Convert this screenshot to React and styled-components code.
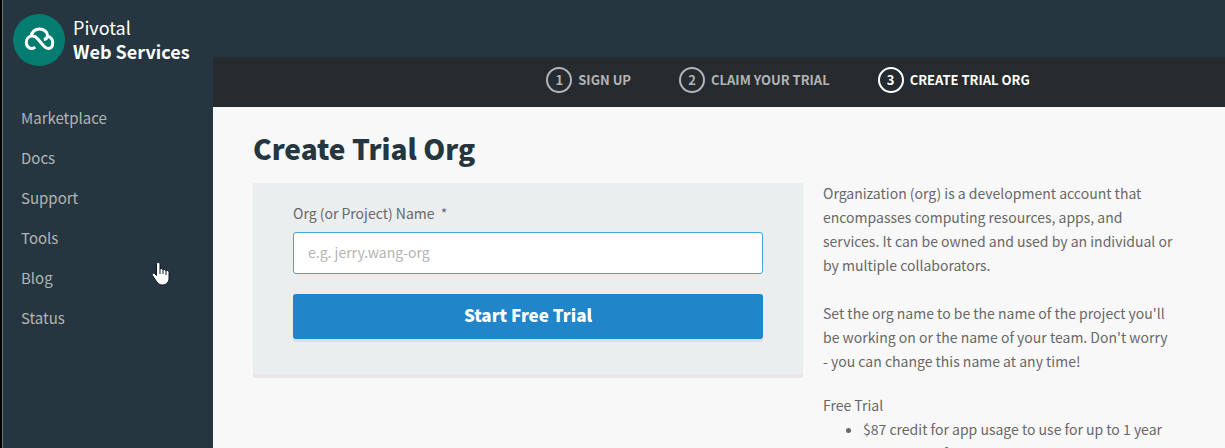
import React from "react";
import styled, { createGlobalStyle } from "styled-components";

const GlobalStyle = createGlobalStyle`
  *, *::before, *::after { box-sizing: border-box; }
  body {
    margin: 0;
    background: #f8f8f8;
    color: #686868;
    font-family: "Noto Sans CJK SC", "Noto Sans", sans-serif;
    font-size: 14px;
    line-height: 24px;
  }
`;

const Page = styled.div`
  display: flex;
  height: 100vh;
  overflow: hidden;
  border-left: 2px solid #000000;
`;

const Sidebar = styled.aside`
  flex: 0 0 211px;
  border-left: 1px solid #6f7678;
  background: #253640;
  color: #ffffff;
`;

const Brand = styled.a`
  display: flex;
  align-items: center;
  gap: 8px;
  padding: 14px 0 0 10px;
  color: inherit;
  font-size: 18px;
  text-decoration: none;
`;

const BrandName = styled.span`
  display: flex;
  flex-direction: column;
  padding-bottom: 2px;
  white-space: nowrap;
`;

const Menu = styled.nav`
  display: flex;
  flex-direction: column;
  gap: 16px;
  padding: 40px 18px;
  font-size: 15px;
`;

const MenuLink = styled.a`
  color: #b4b4b4;
  text-decoration: none;
`;

const Main = styled.main`
  flex: 1;
  min-width: 0;
`;

const TopBar = styled.div`
  height: 57px;
  background: #253640;
`;

const Steps = styled.ol`
  display: flex;
  justify-content: center;
  gap: 48px;
  margin: 0;
  padding: 10px 0 14px 138px;
  background: #252b2e;
  list-style: none;
`;

const Step = styled.li`
  display: flex;
  align-items: center;
  gap: 6px;
  color: ${(p) => (p.$active ? "#ffffff" : "#b4b4b4")};
  font-size: 13px;
  font-weight: 700;
  white-space: nowrap;
`;

const StepNumber = styled.span`
  display: flex;
  align-items: center;
  justify-content: center;
  width: 26px;
  height: 26px;
  border: 2px solid currentColor;
  border-radius: 50%;
`;

const Content = styled.div`
  padding: 21px 40px;
`;

const Title = styled.h1`
  margin: 0 0 13px;
  color: #253640;
  font-size: 28px;
  font-weight: 900;
  line-height: 40px;
`;

const Columns = styled.div`
  display: grid;
  grid-template-columns: minmax(0, 1fr) 362px;
  gap: 20px;
  align-items: start;
`;

const OrgForm = styled.form`
  display: flex;
  flex-direction: column;
  margin-top: 2px;
  padding: 18px 40px 35px;
  border-bottom: 4px solid #e7e7e7;
  background: #eaeeef;
`;

const Label = styled.label`
  margin-bottom: 7px;
`;

const TextInput = styled.input`
  height: 42px;
  margin-bottom: 20px;
  padding: 0 14px 2px;
  border: 1px solid #45a5d8;
  border-radius: 3px;
  background: #ffffff;
  color: #686868;
  font: inherit;
  outline: none;

  &::placeholder {
    color: #b4b4b4;
    opacity: 1;
  }
`;

const SubmitButton = styled.button`
  height: 45px;
  padding: 0 0 4px;
  border: 0;
  border-radius: 3px;
  background: #2185c9;
  box-shadow: 0 3px 0 #dbdfe1;
  color: #ffffff;
  font: inherit;
  font-size: 17px;
  font-weight: 900;
`;

const Info = styled.section`
  min-width: 0;
  padding-right: 12px;
`;

const Paragraph = styled.p`
  margin: 0 0 24px;
`;

const InfoHeading = styled.h2`
  margin: -4px 0 0;
  font-size: 14px;
  font-weight: 400;
  line-height: 24px;
`;

const PlanList = styled.ul`
  margin: 0;
  padding-left: 40px;
`;

const Pointer = styled.svg`
  position: absolute;
  top: 261px;
  left: 151px;
  pointer-events: none;
`;

function Logo() {
  return (
    <svg width="52" height="52" viewBox="0 0 52 52" aria-hidden="true">
      <circle cx="26" cy="26" r="26" fill="#047d70" />
      <path
        d="M22.200 33.200C18.500 36.300 13.300 33.300 13.300 28.500C13.300 24.800 16 22 19.500 22C22.300 22 23.800 23.600 25.500 25.700L30.500 31.800C32 33.500 33.500 34.500 35.300 34.500C38.500 34.500 39.700 31.500 39.700 28.500C39.700 25 37 22.200 33.800 22.200M18.500 22C18.500 18 22 15 26.500 15C31 15 34.500 18.200 34.500 21.200C34.500 23.800 33 25.300 30.800 25.500"
        fill="none"
        stroke="#ffffff"
        strokeWidth="3"
        strokeLinecap="butt"
        strokeLinejoin="round"
      />
    </svg>
  );
}

const menuItems = ["Marketplace", "Docs", "Support", "Tools", "Blog", "Status"];
const steps = ["SIGN UP", "CLAIM YOUR TRIAL", "CREATE TRIAL ORG"];

export default function App() {
  return (
    <>
      <GlobalStyle />
      <Page>
        <Sidebar>
          <Brand href="#">
            <Logo />
            <BrandName>
              <span>Pivotal</span>
              <strong>Web Services</strong>
            </BrandName>
          </Brand>
          <Menu>
            {menuItems.map((item) => (
              <MenuLink key={item} href="#">{item}</MenuLink>
            ))}
          </Menu>
        </Sidebar>
        <Main>
          <TopBar />
          <Steps>
            {steps.map((step, i) => (
              <Step key={step} $active={i === 2}>
                <StepNumber>{i + 1}</StepNumber>
                {step}
              </Step>
            ))}
          </Steps>
          <Content>
            <Title>Create Trial Org</Title>
            <Columns>
              <OrgForm onSubmit={(e) => e.preventDefault()}>
                <Label htmlFor="org-name">Org (or Project) Name &nbsp;*</Label>
                <TextInput id="org-name" type="text" placeholder="e.g. jerry.wang-org" />
                <SubmitButton type="submit">Start Free Trial</SubmitButton>
              </OrgForm>
              <Info>
                <Paragraph>
                  Organization (org) is a development account that encompasses computing
                  resources, apps, and services. It can be owned and used by an individual or
                  by multiple collaborators.
                </Paragraph>
                <Paragraph>
                  Set the org name to be the name of the project you'll be working on or the
                  name of your team. Don't worry - you can change this name at any time!
                </Paragraph>
                <InfoHeading>Free Trial</InfoHeading>
                <PlanList>
                  <li>$87 credit for app usage to use for up to 1 year</li>
                  <li>Up to 2 GB of memory</li>
                </PlanList>
              </Info>
            </Columns>
          </Content>
        </Main>
      </Page>
      <Pointer width="20" height="26" viewBox="0 0 20 26" aria-hidden="true">
        <path
          d="M5.500 3C5.500 1 9 1 9 3V8C10 7 12 7.500 12 9C13 8 15 8.500 15 10C16 9 18 9.500 18 11.500V17C18 21 15.500 24 11.500 24C8 24 6.500 22 4.500 19L1.500 14.500C0.500 12.500 2.500 11.500 4 13L5.500 14.500Z"
          fill="#ffffff"
          stroke="#111827"
        />
        <path d="M9 8V13M12 9V13M15 10V14" stroke="#111827" />
      </Pointer>
    </>
  );
}
